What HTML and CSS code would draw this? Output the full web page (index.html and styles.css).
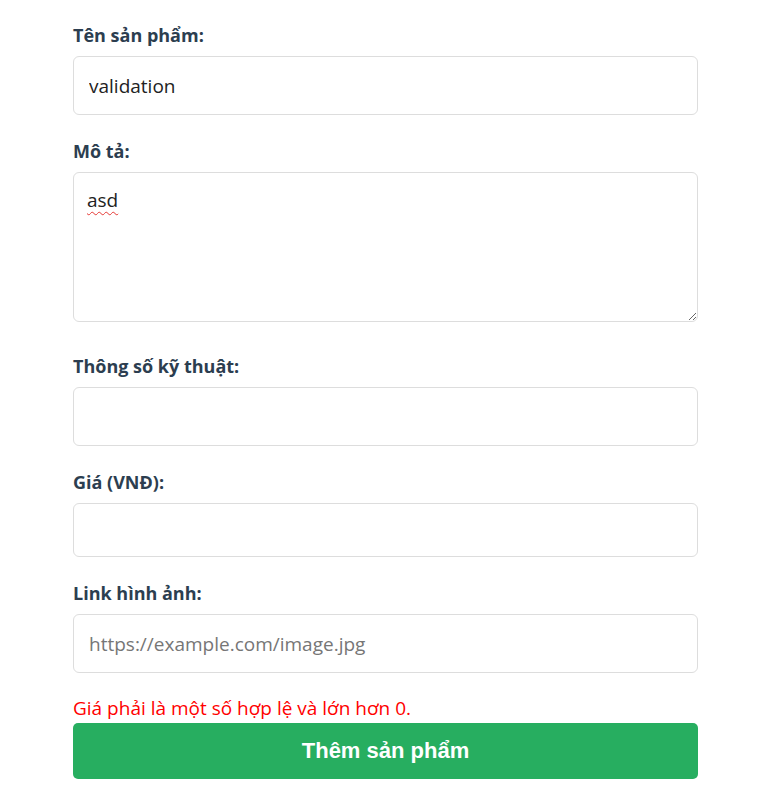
FILE: index.html
```html
<!DOCTYPE html>
<html lang="vi">
<head>
<meta charset="utf-8">
<title>Thêm sản phẩm</title>
<link rel="stylesheet" href="styles.css">
</head>
<body>
<form class="product-form">
  <label class="field-label" for="name">Tên sản phẩm:</label>
  <input class="field-input" id="name" type="text" value="validation">

  <label class="field-label" for="desc">Mô tả:</label>
  <textarea class="field-input field-textarea" id="desc">asd</textarea>

  <label class="field-label" for="spec">Thông số kỹ thuật:</label>
  <input class="field-input" id="spec" type="text">

  <label class="field-label" for="price">Giá (VNĐ):</label>
  <input class="field-input field-number" id="price" type="text">

  <label class="field-label" for="img">Link hình ảnh:</label>
  <input class="field-input field-last" id="img" type="text" placeholder="https://example.com/image.jpg">

  <p class="error-text">Giá phải là một số hợp lệ và lớn hơn 0.</p>
  <button class="submit-btn" type="button">Thêm sản phẩm</button>
</form>
</body>
</html>
```

FILE: styles.css
```css
html, body {
  margin: 0;
  padding: 0;
  background: #ffffff;
}

.product-form {
  width: 625px;
  margin-left: 73px;
  padding-top: 23px;
  display: flex;
  flex-direction: column;
  font-family: "Open Sans", "Noto Sans", sans-serif;
}

.field-label {
  display: block;
  font-size: 18px;
  line-height: 25px;
  font-weight: 700;
  color: #2c3e50;
  margin-bottom: 8px;
}

.field-input {
  display: block;
  box-sizing: border-box;
  width: 100%;
  height: 59px;
  margin: 0 0 24px 0;
  padding: 0 15px;
  border: 1px solid #dddddd;
  border-radius: 6px;
  font-family: "Open Sans", "Noto Sans", sans-serif;
  font-size: 19px;
  color: #222222;
  background: #ffffff;
  outline: none;
}

.field-input::placeholder {
  color: #767676;
}

.field-textarea {
  height: 150px;
  padding: 14px 13px;
  line-height: 26px;
  resize: vertical;
  margin-bottom: 32px;
  text-decoration: underline wavy #e53935;
  text-decoration-thickness: 1px;
  text-underline-offset: 4px;
}

.field-number {
  height: 54px;
}

.field-last {
  margin-bottom: 23px;
}

.error-text {
  margin: 0;
  font-size: 19px;
  line-height: 24px;
  color: #ff0000;
  font-family: "Open Sans", "Noto Sans", sans-serif;
}

.submit-btn {
  margin-top: 3px;
  height: 56px;
  width: 100%;
  border: none;
  border-radius: 5px;
  background: #27ae60;
  color: #ffffff;
  font-family: "Liberation Sans", Arial, sans-serif;
  font-weight: 700;
  font-size: 22px;
  cursor: pointer;
}
```
